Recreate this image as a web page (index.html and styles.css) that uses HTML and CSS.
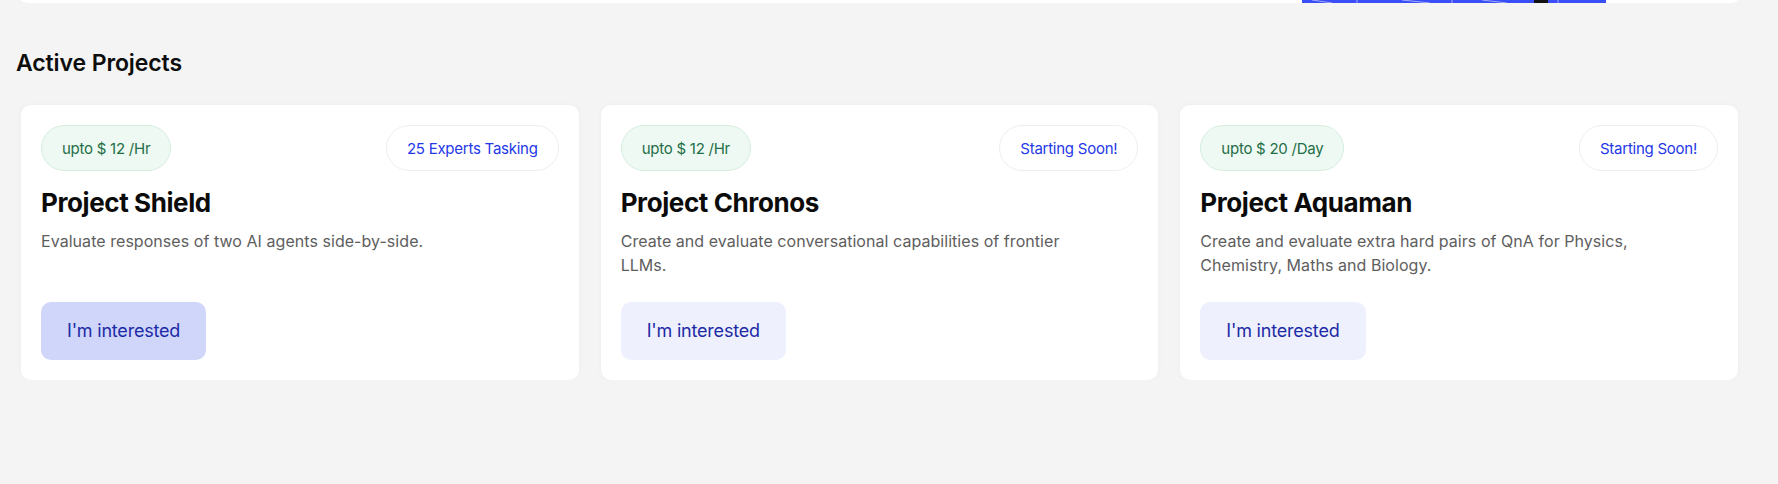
FILE: index.html
```html
<!DOCTYPE html>
<html lang="en">
<head>
<meta charset="utf-8">
<title>Active Projects</title>
<link rel="stylesheet" href="styles.css">
</head>
<body>
<div class="page">
  <div class="top-card">
    <div class="banner">
      <svg width="304" height="3" viewBox="0 0 304 3" preserveAspectRatio="none">
        <rect width="304" height="3" fill="#3a4ef8"/>
        <line x1="10" y1="0" x2="30" y2="3" stroke="#e8ebff" stroke-width="0.6"/>
        <line x1="55" y1="0" x2="55" y2="3" stroke="#e8ebff" stroke-width="0.6"/>
        <line x1="100" y1="0" x2="128" y2="3" stroke="#e8ebff" stroke-width="0.6"/>
        <line x1="150" y1="0" x2="150" y2="3" stroke="#e8ebff" stroke-width="0.6"/>
        <line x1="180" y1="0" x2="205" y2="3" stroke="#e8ebff" stroke-width="0.6"/>
        <rect x="232" y="0" width="14" height="3" fill="#111"/>
        <line x1="256" y1="0" x2="256" y2="3" stroke="#e8ebff" stroke-width="0.6"/>
      </svg>
    </div>
  </div>

  <h2 class="section-title">Active Projects</h2>

  <div class="projects">
    <div class="card">
      <div class="card-top">
        <span class="chip chip-pay">upto $ 12 /Hr</span>
        <span class="chip chip-status">25 Experts Tasking</span>
      </div>
      <h3 class="card-title">Project Shield</h3>
      <p class="card-desc">Evaluate responses of two AI agents side-by-side.</p>
      <button class="btn btn-active">I'm interested</button>
    </div>

    <div class="card">
      <div class="card-top">
        <span class="chip chip-pay">upto $ 12 /Hr</span>
        <span class="chip chip-status">Starting Soon!</span>
      </div>
      <h3 class="card-title">Project Chronos</h3>
      <p class="card-desc">Create and evaluate conversational capabilities of frontier LLMs.</p>
      <button class="btn">I'm interested</button>
    </div>

    <div class="card">
      <div class="card-top">
        <span class="chip chip-pay">upto $ 20 /Day</span>
        <span class="chip chip-status">Starting Soon!</span>
      </div>
      <h3 class="card-title">Project Aquaman</h3>
      <p class="card-desc">Create and evaluate extra hard pairs of QnA for Physics, Chemistry, Maths and Biology.</p>
      <button class="btn">I'm interested</button>
    </div>
  </div>
</div>
</body>
</html>
```

FILE: styles.css
```css
* {
  box-sizing: border-box;
}

html, body {
  margin: 0;
  padding: 0;
  background: #f4f4f4;
}

body {
  font-family: Inter, "Noto Sans", "Liberation Sans", sans-serif;
  color: #0d0d0d;
}

.page {
  padding: 0 40px 0 0;
}

.top-card {
  margin-left: 21px;
  height: 3px;
  background: #ffffff;
  border-radius: 0 0 10px 10px / 0 0 3px 3px;
  display: flex;
  justify-content: flex-end;
  padding-right: 132px;
}

.banner {
  width: 304px;
  height: 3px;
  display: flex;
}

.section-title {
  margin: 46px 0 0 16px;
  font-size: 23px;
  line-height: 28px;
  font-weight: 600;
  letter-spacing: -0.1px;
  color: #0d0d0d;
}

.projects {
  margin: 28px 0 0 21px;
  display: grid;
  grid-template-columns: repeat(3, 1fr);
  gap: 22px;
}

.card {
  background: #ffffff;
  border-radius: 10px;
  padding: 20px;
  display: flex;
  flex-direction: column;
  align-items: flex-start;
  box-shadow: 0 0 6px rgba(0, 0, 0, 0.03);
}

.card-top {
  width: 100%;
  display: flex;
  justify-content: space-between;
  align-items: center;
}

.chip {
  height: 46px;
  padding: 0 20px;
  border-radius: 23px;
  display: inline-flex;
  align-items: center;
  font-size: 15px;
  letter-spacing: -0.25px;
  border: 1px solid #eeeeee;
}

.chip-pay {
  background: #edf9f2;
  border-color: #d6eee1;
  color: #1f6e47;
}

.chip-status {
  background: #ffffff;
  color: #2438e8;
}

.card-title {
  margin: 16px 0 0 0;
  font-size: 26px;
  line-height: 32px;
  font-weight: 700;
  letter-spacing: -0.4px;
  color: #0b0b0b;
}

.card-desc {
  margin: 10px 0 25px 0;
  font-size: 16px;
  line-height: 24px;
  color: #5e5e5e;
  max-width: 462px;
  letter-spacing: 0.05px;
}

.btn {
  margin-top: auto;
  align-self: flex-start;
  border: none;
  border-radius: 10px;
  background: #eef1fd;
  color: #1d2aa6;
  font-family: inherit;
  font-size: 18px;
  line-height: 24px;
  padding: 17px 26px;
  letter-spacing: -0.2px;
}

.btn-active {
  background: #cfd6fa;
}
```
